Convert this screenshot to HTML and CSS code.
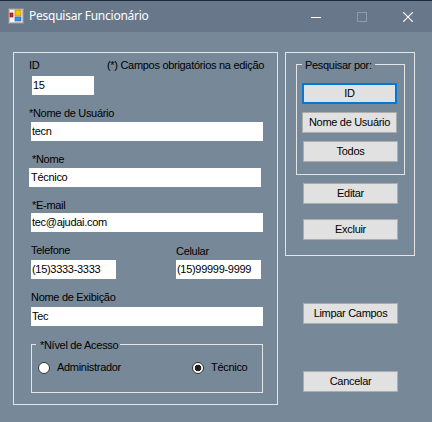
FILE: index.html
```html
<!DOCTYPE html>
<html lang="pt-BR">
<head>
<meta charset="utf-8">
<title>Pesquisar Funcionário</title>
<link rel="stylesheet" href="styles.css">
</head>
<body>
<div class="window">
  <header class="titlebar">
    <svg class="app-icon" width="16" height="16" viewBox="0 0 16 16">
      <rect x="0.5" y="0.5" width="15" height="15" fill="#e4e4e4" stroke="#8a8a8a"/>
      <rect x="1.5" y="1.5" width="13" height="13" fill="#f4f4f4" stroke="#c0c0c0"/>
      <rect x="2" y="5" width="3" height="4" fill="#e02020" stroke="#7a1010" stroke-width="0.6"/>
      <rect x="7" y="2" width="6" height="6" fill="#f5c400" stroke="#b08000" stroke-width="0.6"/>
      <rect x="7" y="9" width="6" height="4" fill="#3c8ee6" stroke="#1f5fa8" stroke-width="0.6"/>
    </svg>
    <span class="title">Pesquisar Funcionário</span>
    <div class="caption-buttons">
      <span class="cap-btn"><svg width="10" height="10" viewBox="0 0 10 10"><line x1="0" y1="5.5" x2="10" y2="5.5" stroke="#ffffff" stroke-width="1"/></svg></span>
      <span class="cap-btn"><svg width="10" height="10" viewBox="0 0 10 10"><rect x="0.5" y="0.5" width="9" height="9" fill="none" stroke="#8f9cab" stroke-width="1"/></svg></span>
      <span class="cap-btn"><svg width="10" height="10" viewBox="0 0 10 10"><path d="M0 0 L10 10 M10 0 L0 10" stroke="#ffffff" stroke-width="1.1"/></svg></span>
    </div>
  </header>
  <main class="client">
    <section class="group main-group">
      <div class="row-top">
        <span class="lbl lbl-id">ID</span>
        <span class="lbl">(*) Campos obrigatórios na edição</span>
      </div>
      <div class="tb tb-id">15</div>

      <span class="lbl lbl-user">*Nome de Usuário</span>
      <div class="tb tb-wide">tecn</div>

      <span class="lbl lbl-nome">*Nome</span>
      <div class="tb tb-wide tb-nome">Técnico</div>

      <span class="lbl lbl-nome">*E-mail</span>
      <div class="tb tb-wide tb-email">tec@ajudai.com</div>

      <div class="row-phone labels">
        <span class="lbl">Telefone</span>
        <span class="lbl lbl-cel">Celular</span>
      </div>
      <div class="row-phone inputs">
        <div class="tb tb-phone">(15)3333-3333</div>
        <div class="tb tb-phone">(15)99999-9999</div>
      </div>

      <span class="lbl">Nome de Exibição</span>
      <div class="tb tb-wide tb-exib">Tec</div>

      <div class="nivel">
        <span class="legend">*Nível de Acesso</span>
        <div class="radios">
          <label class="radio"><span class="radio-dot"></span>Administrador</label>
          <label class="radio"><span class="radio-dot checked"></span>Técnico</label>
        </div>
      </div>
    </section>

    <aside class="side">
      <section class="group search-group">
        <div class="inner-group">
          <span class="legend legend-search">Pesquisar por:</span>
          <div class="btn btn-focus">ID</div>
          <div class="btn">Nome de Usuário</div>
          <div class="btn btn-todos">Todos</div>
        </div>
        <div class="btn btn-editar">Editar</div>
        <div class="btn btn-excluir">Excluir</div>
      </section>
      <div class="btn btn-limpar">Limpar Campos</div>
      <div class="btn btn-cancelar">Cancelar</div>
    </aside>
  </main>
</div>
</body>
</html>
```
FILE: styles.css
```css
* {
  box-sizing: border-box;
}

html,
body {
  margin: 0;
  padding: 0;
}

body {
  width: 432px;
  height: 422px;
  overflow: hidden;
  background: #778899;
  font-family: "Liberation Sans", Arial, sans-serif;
  font-size: 11px;
  line-height: 13px;
  letter-spacing: -0.3px;
  color: #000;
}

.window {
  width: 432px;
  height: 422px;
  display: flex;
  flex-direction: column;
}

/* title bar */
.titlebar {
  flex: none;
  height: 32px;
  display: flex;
  align-items: center;
  background: #68788a;
  border-top: 1px solid #1f2a3a;
}

.app-icon {
  flex: none;
  margin-left: 8px;
  margin-top: -2px;
}

.title {
  margin-left: 5px;
  margin-top: -2px;
  font-family: "Noto Sans", "Open Sans", sans-serif;
  font-size: 12px;
  letter-spacing: -0.25px;
  color: #ffffff;
}

.caption-buttons {
  margin-left: auto;
  height: 100%;
  display: flex;
  padding-right: 1px;
}

.cap-btn {
  width: 46px;
  display: flex;
  align-items: center;
  justify-content: center;
}

.cap-btn svg {
  display: block;
}

/* client area */
.client {
  flex: 1;
  display: flex;
  align-items: flex-start;
  padding: 20px 0 0 13px;
}

.group {
  border: 1px solid #e4e4e4;
  position: relative;
}

.main-group {
  width: 265px;
  height: 353px;
  padding: 0 0 0 17px;
}

.lbl {
  display: block;
  white-space: nowrap;
}

.row-top {
  display: grid;
  grid-template-columns: 76px auto;
  margin-top: 6px;
}

.lbl-id {
  margin-left: -2px;
}

.lbl-user {
  margin-top: 12px;
  margin-left: -2px;
}

.lbl-nome {
  margin-top: 12px;
  margin-left: 1px;
}

.tb {
  height: 19px;
  background: #ffffff;
  line-height: 19px;
  padding-left: 1px;
  white-space: nowrap;
  overflow: hidden;
}

.tb-id {
  width: 62px;
  margin-top: 4px;
  margin-left: 1px;
}

.tb-wide {
  width: 232px;
  margin-top: 2px;
}

.tb-nome {
  margin-left: -2px;
  padding-left: 2px;
}

.tb-email {
  margin-top: 1px;
}

.row-phone {
  display: grid;
  grid-template-columns: 145px auto;
}

.row-phone.labels {
  margin-top: 12px;
}

.lbl-cel {
  margin-top: 1px;
}

.row-phone.inputs {
  margin-top: 2px;
  margin-bottom: 12px;
}

.tb-phone {
  width: 85px;
}

.tb-exib {
  margin-top: 3px;
}

.nivel {
  position: relative;
  width: 232px;
  height: 49px;
  margin-top: 18px;
  border: 1px solid #e4e4e4;
}

.legend {
  position: absolute;
  top: -6px;
  left: 4px;
  padding: 0 2px 0 4px;
  background: #778899;
  line-height: 13px;
  white-space: nowrap;
}

.radios {
  display: grid;
  grid-template-columns: 154px auto;
  padding-left: 6px;
  margin-top: 16px;
}

.radio {
  display: flex;
  align-items: center;
  gap: 7px;
  white-space: nowrap;
}

.radio-dot {
  flex: none;
  width: 12px;
  height: 12px;
  border-radius: 50%;
  border: 1px solid #333333;
  background: #ffffff;
}

.radio-dot.checked {
  background: radial-gradient(circle, #1c1c1c 0 3px, #ffffff 3.6px);
}

/* right side */
.side {
  margin-left: 7px;
  display: flex;
  flex-direction: column;
  align-items: flex-start;
}

.search-group {
  width: 130px;
  height: 204px;
  padding: 11px 0 0 10px;
}

.inner-group {
  position: relative;
  width: 109px;
  height: 111px;
  border: 1px solid #e4e4e4;
  padding: 18px 0 0 5px;
  display: flex;
  flex-direction: column;
  align-items: flex-start;
  gap: 8px;
}

.legend-search {
  left: 5px;
  padding: 0 3px 0 3px;
}

.btn {
  width: 95px;
  height: 21px;
  border: 1px solid #adadad;
  background: #e1e1e1;
  text-align: center;
  line-height: 19px;
  white-space: nowrap;
}

.btn-focus {
  border: 2px solid #0078d7;
  line-height: 17px;
}

.btn-todos {
  margin-left: 1px;
}

.btn-editar {
  margin-top: 8px;
  margin-left: 7px;
}

.btn-excluir {
  margin-top: 15px;
  margin-left: 7px;
}

.btn-limpar {
  margin-top: 47px;
  margin-left: 18px;
}

.btn-cancelar {
  margin-top: 47px;
  margin-left: 18px;
}
```
